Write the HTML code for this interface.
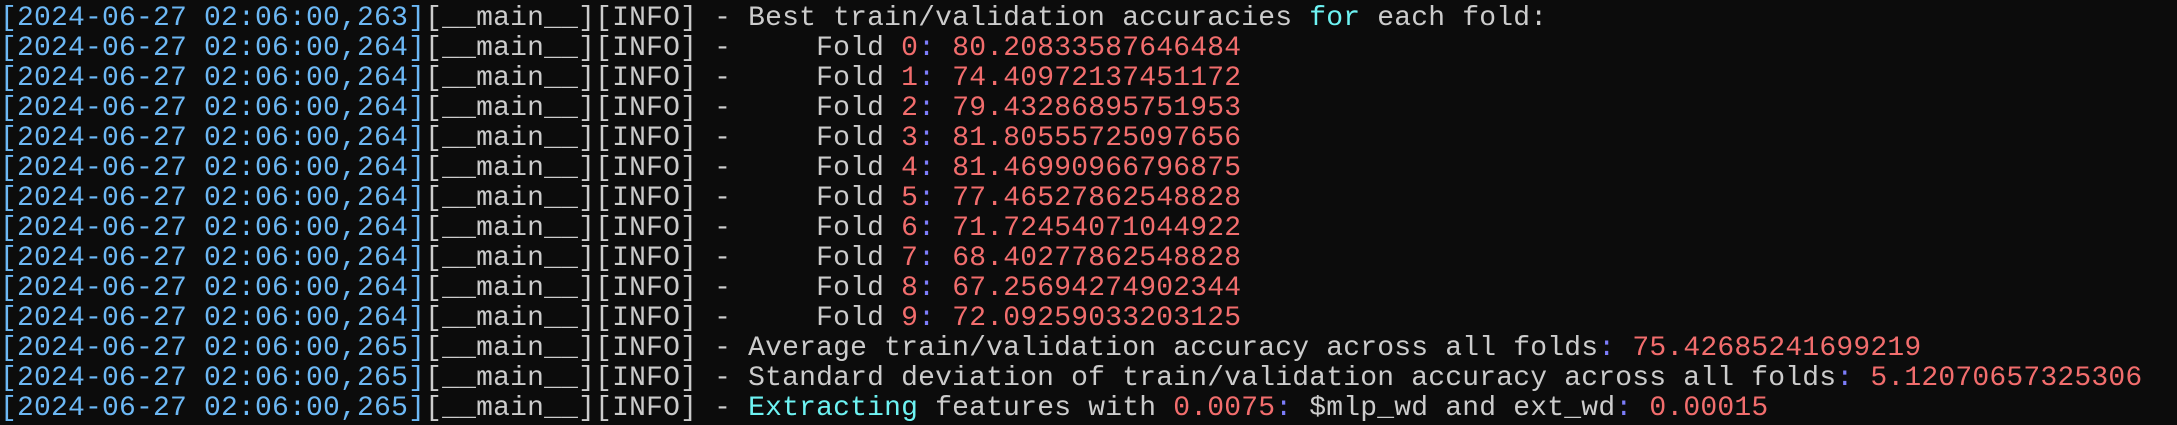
<!DOCTYPE html>
<html><head><meta charset="utf-8"><style>
html,body{margin:0;padding:0;background:#0c0c0c;}
body{width:2177px;height:425px;overflow:hidden;}
pre{margin:0;padding:3.6px 0 0 0;font-family:"Liberation Mono",monospace;font-size:28px;line-height:30px;letter-spacing:0.2px;color:#cccccc;white-space:pre;}
.b{color:#6cb8f5}.r{color:#f26d6d}.p{color:#7d7dfa}.c{color:#6ef3f3;}
</style></head><body><pre><span class="b">[2024-06-27 02:06:00,263]</span>[__main__][INFO] - Best train/validation accuracies <span class="c">for</span> each fold:
<span class="b">[2024-06-27 02:06:00,264]</span>[__main__][INFO] -     Fold <span class="r">0</span><span class="p">:</span> <span class="r">80.20833587646484</span>
<span class="b">[2024-06-27 02:06:00,264]</span>[__main__][INFO] -     Fold <span class="r">1</span><span class="p">:</span> <span class="r">74.40972137451172</span>
<span class="b">[2024-06-27 02:06:00,264]</span>[__main__][INFO] -     Fold <span class="r">2</span><span class="p">:</span> <span class="r">79.43286895751953</span>
<span class="b">[2024-06-27 02:06:00,264]</span>[__main__][INFO] -     Fold <span class="r">3</span><span class="p">:</span> <span class="r">81.80555725097656</span>
<span class="b">[2024-06-27 02:06:00,264]</span>[__main__][INFO] -     Fold <span class="r">4</span><span class="p">:</span> <span class="r">81.46990966796875</span>
<span class="b">[2024-06-27 02:06:00,264]</span>[__main__][INFO] -     Fold <span class="r">5</span><span class="p">:</span> <span class="r">77.46527862548828</span>
<span class="b">[2024-06-27 02:06:00,264]</span>[__main__][INFO] -     Fold <span class="r">6</span><span class="p">:</span> <span class="r">71.72454071044922</span>
<span class="b">[2024-06-27 02:06:00,264]</span>[__main__][INFO] -     Fold <span class="r">7</span><span class="p">:</span> <span class="r">68.40277862548828</span>
<span class="b">[2024-06-27 02:06:00,264]</span>[__main__][INFO] -     Fold <span class="r">8</span><span class="p">:</span> <span class="r">67.25694274902344</span>
<span class="b">[2024-06-27 02:06:00,264]</span>[__main__][INFO] -     Fold <span class="r">9</span><span class="p">:</span> <span class="r">72.09259033203125</span>
<span class="b">[2024-06-27 02:06:00,265]</span>[__main__][INFO] - Average train/validation accuracy across all folds<span class="p">:</span> <span class="r">75.42685241699219</span>
<span class="b">[2024-06-27 02:06:00,265]</span>[__main__][INFO] - Standard deviation of train/validation accuracy across all folds<span class="p">:</span> <span class="r">5.12070657325306</span>
<span class="b">[2024-06-27 02:06:00,265]</span>[__main__][INFO] - <span class="c">Extracting</span> features with <span class="r">0.0075</span><span class="p">:</span> $mlp_wd and ext_wd<span class="p">:</span> <span class="r">0.00015</span></pre></body></html>
